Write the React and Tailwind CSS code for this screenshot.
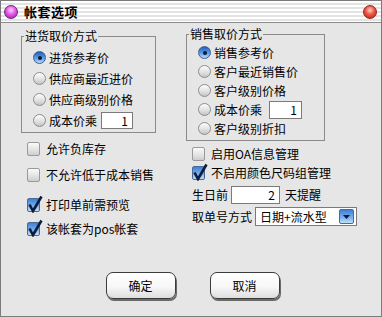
import React from "react";

const font = { fontFamily: '"Noto Sans CJK SC", "Noto Sans", sans-serif' };

// --- Aqua style radio ---
const Radio = ({ checked }) => (
  <span
    className={`relative flex h-[13px] w-[13px] shrink-0 items-center justify-center rounded-full border ${
      checked
        ? "border-[#3b5f8f] bg-[linear-gradient(180deg,#1f5fc4_0%,#5b9be6_55%,#b9dcf8_100%)]"
        : "border-[#8d8d8d] bg-[linear-gradient(180deg,#fdfdfd_0%,#e2e2e2_55%,#c4c4c4_100%)]"
    }`}
  >
    {checked && <span className="h-[4px] w-[4px] rounded-full bg-[#0b1a33]"></span>}
  </span>
);

// --- Aqua style checkbox ---
const Check = ({ checked }) => (
  <span
    className={`relative block h-[14px] w-[13px] shrink-0 rounded-[2px] border ${
      checked
        ? "border-[#4a6a96] bg-[linear-gradient(180deg,#3f7fd8_0%,#7cb1ec_60%,#c3e0f8_100%)]"
        : "border-[#9a9a9a] bg-[linear-gradient(180deg,#fafafa_0%,#e2e2e2_60%,#cdcdcd_100%)]"
    }`}
  >
    {checked && (
      <svg className="absolute -top-[4px] left-[0px]" width="15" height="18" viewBox="0 0 15 18">
        <path d="M1.5 9.5 L5 16 L13.5 1.5" fill="none" stroke="#0d1c3c" strokeWidth="2.6" strokeLinejoin="miter" />
      </svg>
    )}
  </span>
);

const TextBox = ({ value, className }) => (
  <div className={`flex items-center justify-end border border-[#7a7a7a] bg-white pr-[4px] leading-none ${className}`}>
    {value}
  </div>
);

const Group = ({ title, className, children }) => (
  <fieldset className={`border border-[#8a8a8a] ${className}`}>
    <legend className="ml-[2px] px-[1px] text-[12px] leading-[14px]">{title}</legend>
    {children}
  </fieldset>
);

const RadioRow = ({ label, checked, h, children }) => (
  <div className={`flex items-center gap-[3px] whitespace-nowrap pl-[11px] ${h}`}>
    <Radio checked={checked} />
    <span>{label}</span>
    {children}
  </div>
);

const CheckRow = ({ label, checked, className = "" }) => (
  <div className={`flex items-center gap-[6px] whitespace-nowrap pl-[6px] ${className}`}>
    <Check checked={checked} />
    <span>{label}</span>
  </div>
);

const AquaButton = ({ children }) => (
  <button className="flex h-[27px] w-[70px] items-center justify-center rounded-[7px] border border-[#3c3c3c] bg-[linear-gradient(180deg,#ffffff_0%,#f7f7f7_55%,#dedede_100%)] text-[12px] shadow-[1px_2px_0_#6a6a6a]">
    {children}
  </button>
);

export default function App() {
  return (
    <div className="flex h-[317px] w-[382px] flex-col border border-[#7b7b7b] bg-[#e6e6e6] text-[12px] text-black" style={font}>
      {/* title bar */}
      <div className="flex h-[22px] shrink-0 items-center border-b border-[#8a8a8a] bg-[image:repeating-linear-gradient(180deg,#ffffff_0px,#ffffff_2px,#e3e3e3_2px,#e3e3e3_4px)] pl-[3px] pr-[4px]">
        <span className="h-[14px] w-[14px] rounded-full border border-[#6b2a72] bg-[radial-gradient(circle_at_50%_35%,#ffd0ff_0%,#e35ae8_45%,#8a1e92_100%)]"></span>
        <span className="ml-[6px] text-[13px] font-bold tracking-[0.5px]">帐套选项</span>
        <span className="ml-auto h-[14px] w-[14px] rounded-full border border-[#8a2a22] bg-[radial-gradient(circle_at_50%_35%,#ffd0c8_0%,#f0543f_45%,#a4231a_100%)]"></span>
      </div>

      {/* body */}
      <div className="flex pl-[20px]">
        {/* left column */}
        <div className="flex w-[135px] flex-col">
          <Group title="进货取价方式" className="mt-[6px] pb-[1px] pt-[4px]">
            <RadioRow label="进货参考价" checked h="h-[21px]" />
            <RadioRow label="供应商最近进价" h="h-[21px]" />
            <RadioRow label="供应商级别价格" h="h-[21px]" />
            <RadioRow label="成本价乘" h="h-[21px]">
              <TextBox value="1" className="ml-[1px] h-[17px] w-[32px]" />
            </RadioRow>
          </Group>
          <CheckRow label="允许负库存" className="mt-[6px] h-[20px]" />
          <CheckRow label="不允许低于成本销售" className="mt-[6px] h-[20px]" />
          <CheckRow label="打印单前需预览" checked className="mt-[10px] h-[20px]" />
          <CheckRow label="该帐套为pos帐套" checked className="mt-[4px] h-[20px]" />
        </div>

        {/* right column */}
        <div className="ml-[30px] flex w-[139px] flex-col">
          <Group title="销售取价方式" className="mt-[4px] pb-[2px] pt-[2px]">
            <RadioRow label="销售参考价" checked h="h-[19px]" />
            <RadioRow label="客户最近销售价" h="h-[19px]" />
            <RadioRow label="客户级别价格" h="h-[19px]" />
            <RadioRow label="成本价乘" h="h-[19px]">
              <TextBox value="1" className="ml-[4px] h-[18px] w-[33px]" />
            </RadioRow>
            <RadioRow label="客户级别折扣" h="h-[19px]" />
          </Group>
          <CheckRow label="启用OA信息管理" className="mt-[3px] h-[19px]" />
          <CheckRow label="不启用颜色尺码组管理" checked className="h-[19px]" />
          <div className="mt-[4px] flex h-[18px] items-center whitespace-nowrap pl-[6px]">
            <span>生日前</span>
            <TextBox value="2" className="ml-[3px] h-[18px] w-[49px]" />
            <span className="ml-[5px]">天提醒</span>
          </div>
          <div className="mt-[3px] flex h-[19px] items-center whitespace-nowrap pl-[6px]">
            <span>取单号方式</span>
            <div className="ml-[3px] flex h-[19px] w-[102px] shrink-0 items-center border border-[#7a7a7a] bg-white pl-[4px] pr-[2px]">
              <span>日期+流水型</span>
              <span className="ml-auto flex h-[15px] w-[15px] items-center justify-center rounded-[2px] border border-[#4a6a96] bg-[linear-gradient(180deg,#3f7fd8_0%,#7cb1ec_60%,#c3e0f8_100%)]">
                <svg width="7" height="4" viewBox="0 0 7 4">
                  <path d="M0 0 H7 L3.5 4 Z" fill="#0b1a33" />
                </svg>
              </span>
            </div>
          </div>
        </div>
      </div>

      {/* buttons */}
      <div className="mt-[33px] flex justify-center gap-[34px] pl-[3px]">
        <AquaButton>确定</AquaButton>
        <AquaButton>取消</AquaButton>
      </div>
    </div>
  );
}
